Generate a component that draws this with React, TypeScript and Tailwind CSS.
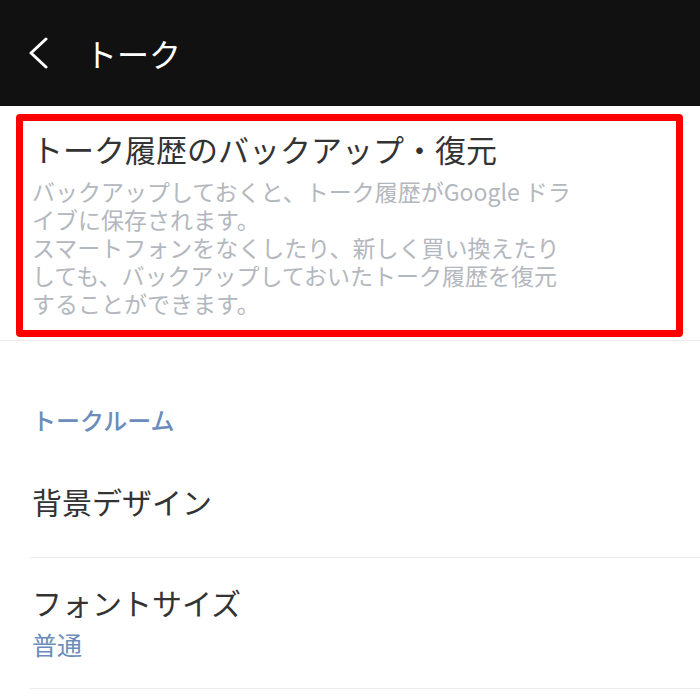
const jp = "font-['Noto_Sans_CJK_JP','Noto_Sans',sans-serif]";

function Header() {
  return (
    <header className="flex h-[106px] items-center bg-[#111111] pl-[28px]">
      <svg width="20" height="32" viewBox="0 0 20 32" fill="none" className="shrink-0">
        <polyline points="18,2 3,16 18,30" stroke="#ffffff" strokeWidth="3" strokeLinecap="round" strokeLinejoin="round" />
      </svg>
      <h1 className="ml-[37px] text-[32px] leading-none text-white">トーク</h1>
    </header>
  );
}

function BackupItem() {
  return (
    <div className="relative border-b border-[#ebebeb] pb-[23px] pl-[32px] pr-[40px] pt-[25px]">
      <p className="text-[31px] leading-[36px] text-[#333333]">トーク履歴のバックアップ・復元</p>
      <p className="mt-[10px] text-[23px] leading-[28px] text-[#b3b7be]">
        バックアップしておくと、トーク履歴がGoogle ドラ
        <br />
        イブに保存されます。
        <br />
        スマートフォンをなくしたり、新しく買い換えたり
        <br />
        しても、バックアップしておいたトーク履歴を復元
        <br />
        することができます。
      </p>
      {/* annotation frame */}
      <div className="pointer-events-none absolute bottom-[3px] left-[16px] right-[17px] top-[8px] rounded-[4px] border-[7px] border-[#ff0000]" />
    </div>
  );
}

export default function App() {
  return (
    <div className={`min-h-[700px] w-[700px] bg-white ${jp}`}>
      <Header />
      <BackupItem />

      {/* Section */}
      <div className="pb-[16px] pl-[32px] pt-[63px]">
        <p className="text-[24px] font-medium leading-[32px] text-[#6b8dbb]">トークルーム</p>
      </div>

      <div className="ml-[30px] border-b border-[#ebebeb] pb-[38px] pl-[2px] pt-[31px]">
        <p className="text-[30px] leading-[36px] text-[#333333]">背景デザイン</p>
      </div>

      <div className="ml-[30px] border-b border-[#ebebeb] pb-[28px] pl-[2px] pt-[26px]">
        <p className="text-[30px] leading-[36px] text-[#333333]">フォントサイズ</p>
        <p className="mt-[8px] text-[25px] leading-[32px] text-[#6b8dbb]">普通</p>
      </div>
    </div>
  );
}
